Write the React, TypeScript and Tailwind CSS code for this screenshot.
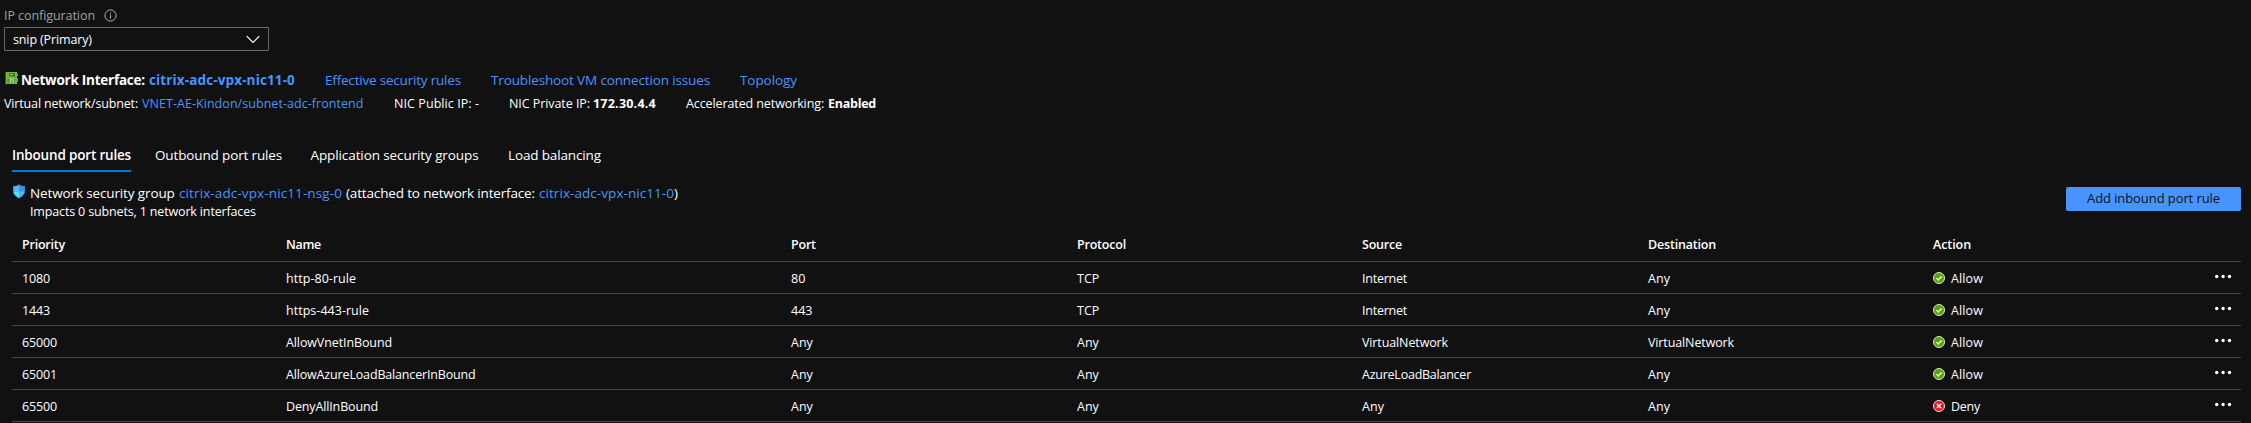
type Rule = {
  priority: string;
  name: string;
  nameTracking: string;
  port: string;
  protocol: string;
  source: string;
  sourceTracking: string;
  destination: string;
  destinationTracking: string;
  allow: boolean;
};

const rules: Rule[] = [
  { priority: "1080", name: "http-80-rule", nameTracking: "tracking-[0.04px]", port: "80", protocol: "TCP", source: "Internet", sourceTracking: "tracking-[-0.24px]", destination: "Any", destinationTracking: "tracking-[0.1px]", allow: true },
  { priority: "1443", name: "https-443-rule", nameTracking: "tracking-[0.03px]", port: "443", protocol: "TCP", source: "Internet", sourceTracking: "tracking-[-0.24px]", destination: "Any", destinationTracking: "tracking-[0.1px]", allow: true },
  { priority: "65000", name: "AllowVnetInBound", nameTracking: "tracking-[-0.11px]", port: "Any", protocol: "Any", source: "VirtualNetwork", sourceTracking: "tracking-[-0.12px]", destination: "VirtualNetwork", destinationTracking: "tracking-[-0.12px]", allow: true },
  { priority: "65001", name: "AllowAzureLoadBalancerInBound", nameTracking: "tracking-[-0.16px]", port: "Any", protocol: "Any", source: "AzureLoadBalancer", sourceTracking: "tracking-[-0.24px]", destination: "Any", destinationTracking: "tracking-[0.1px]", allow: true },
  { priority: "65500", name: "DenyAllInBound", nameTracking: "tracking-[-0.14px]", port: "Any", protocol: "Any", source: "Any", sourceTracking: "tracking-[0.1px]", destination: "Any", destinationTracking: "tracking-[0.1px]", allow: false },
];

const rowGrid =
  "grid grid-cols-[264px_505px_286px_285px_286px_285px_1fr] border-b border-[#484644] [&>*]:pl-2.5";

function InfoIcon() {
  return (
    <svg className="mt-[3px] ml-2 size-[13px]" viewBox="0 0 13 13" fill="none">
      <circle cx="6.5" cy="6.5" r="5.6" stroke="#b4b2b0" strokeWidth="1" />
      <path d="M6.5 5.6V9.6M6.5 3.4V4.6" stroke="#b4b2b0" strokeWidth="1" />
    </svg>
  );
}

function NicIcon() {
  return (
    <svg className="mt-[2px] mr-[3px] size-[13px]" viewBox="0 0 13 13">
      <path d="M0 .5h1v12H0z" fill="#4a4a4a" />
      <path d="M11 1.500h1.800v2.600H11zM11 6h1.800v4H11z" fill="#c8a11c" />
      <path d="M1 0h11v12H1z" fill="#6fb43f" />
      <path d="M4 1h6v3.500H4z" fill="#3d7a25" />
      <path d="M5 2h3v1H5z" fill="#8fcf5f" />
      <path d="M2.500 6.500h2v4h-2zM6 8h1.500v3H6zM9 6.500h1v4H9z" fill="#4c9130" />
      <path d="M5 5.500h1.200v5H5zM7.600 6h1v5h-1z" fill="#b9e39a" />
    </svg>
  );
}

function ShieldIcon() {
  return (
    <svg className="mr-1 h-[15px] w-[14px]" viewBox="0 0 14 15">
      <path d="M7 .3C5.300 1.700 3.200 2 1 2v5.200c0 3.500 3 5.600 6 7.300z" fill="#2f86d8" />
      <path d="M7 .3C8.700 1.700 10.800 2 13 2v5.200c0 3.500-3 5.600-6 7.300z" fill="#2f86d8" />
      <path d="M7 1.300C5.500 2.300 3.600 2.600 1.700 2.700V7.500H7z" fill="#5ab8f4" />
      <path d="M7 1.300C8.500 2.300 10.400 2.600 12.300 2.700V7.500H7z" fill="#3d93e8" />
      <path d="M1.700 7.500H7v6.200C4.500 12.200 1.900 10.400 1.700 7.500z" fill="#50e0fb" />
      <path d="M12.300 7.500H7v6.200c2.500-1.500 5.100-3.300 5.300-6.200z" fill="#5fb0f4" />
    </svg>
  );
}

function StatusIcon({ allow }: { allow: boolean }) {
  return (
    <svg className="mt-[3px] mr-[6px] size-3" viewBox="0 0 12 12" fill="none">
      <circle cx="6" cy="6" r="5.5" fill={allow ? "#57a300" : "#e81123"} stroke="#dfe5da" strokeWidth="1" />
      {allow ? (
        <path d="M3.300 6.100L5.200 8L8.700 4.200" stroke="#fff" strokeWidth="1.300" />
      ) : (
        <path d="M3.800 3.800L8.200 8.200M8.200 3.800L3.800 8.200" stroke="#fff" strokeWidth="1.300" />
      )}
    </svg>
  );
}

function More() {
  return (
    <svg className="mt-[7px] mr-[9px] h-4 w-[17px]" viewBox="0 0 17 16" fill="#fff">
      <circle cx="1.700" cy="7.500" r="1.700" />
      <circle cx="8.100" cy="7.500" r="1.700" />
      <circle cx="14.500" cy="7.500" r="1.700" />
    </svg>
  );
}

export default function App() {
  return (
    <div className="h-[423px] overflow-hidden bg-[#111111] pt-1.5 font-['Open_Sans',sans-serif] text-[12.5px] leading-5 whitespace-nowrap text-white">
      <div className="flex h-5 pl-1 tracking-[-0.07px] text-[#a19f9d]">
        <span className="w-[92px]">IP configuration</span>
        <InfoIcon />
      </div>
      <div className="mt-px ml-1 flex h-6 w-[265px] justify-between rounded-[1px] border border-[#6b6967] pr-2 pl-2">
        <span className="mt-0.5 tracking-[-0.13px]">snip (Primary)</span>
        <svg className="mt-[7px] h-[9px] w-[14px]" viewBox="0 0 14 9" fill="none">
          <path d="M.700 1.200L7 7.500L13.300 1.200" stroke="#fff" strokeWidth="1.200" />
        </svg>
      </div>

      <div className="mt-[19px] flex h-5 pl-[5px] text-[13.5px] text-[#4894fe]">
        <NicIcon />
        <span className="w-32 font-bold tracking-[-0.24px] text-white">Network Interface:</span>
        <a className="w-44 font-bold tracking-[0.13px]">citrix-adc-vpx-nic11-0</a>
        <a className="w-[166px] tracking-[-0.2px]">Effective security rules</a>
        <a className="w-[249px] tracking-[-0.135px]">Troubleshoot VM connection issues</a>
        <a className="tracking-[-0.07px]">Topology</a>
      </div>
      <div className="mt-1 flex h-5 pl-1">
        <span className="w-[138px] tracking-[-0.15px]">Virtual network/subnet:</span>
        <a className="w-[252px] tracking-[0.05px] text-[#4894fe]">VNET-AE-Kindon/subnet-adc-frontend</a>
        <span className="w-[115px] tracking-[0.07px]">NIC Public IP: -</span>
        <span className="w-[84px] tracking-[-0.07px]">NIC Private IP:</span>
        <b className="w-[93px] tracking-[0.22px]">172.30.4.4</b>
        <span className="w-[142px] tracking-[-0.1px]">Accelerated networking:</span>
        <b className="tracking-[-0.26px]">Enabled</b>
      </div>

      <div className="mt-[31px] flex h-[27px] pl-3 text-[13.5px]">
        <div className="mr-6 w-[119px] border-b-2 border-[#0078d4] font-semibold tracking-[-0.18px]">Inbound port rules</div>
        <div className="w-[155.5px] tracking-[-0.14px]">Outbound port rules</div>
        <div className="w-[197.5px] tracking-[-0.1px]">Application security groups</div>
        <div className="tracking-[-0.14px]">Load balancing</div>
      </div>

      <div className="mt-3 flex h-9 justify-between pr-2.5 pl-3 leading-[18px]">
        <div className="flex">
          <ShieldIcon />
          <div>
            <div className="flex text-[13.5px]">
              <span className="w-[149px] tracking-[-0.13px]">Network security group</span>
              <a className="w-[167px] tracking-[0.115px] text-[#4894fe]">citrix-adc-vpx-nic11-nsg-0</a>
              <span className="w-[193px] tracking-[-0.155px]">(attached to network interface:</span>
              <a className="tracking-[0.06px] text-[#4894fe]">citrix-adc-vpx-nic11-0</a>
              <span>)</span>
            </div>
            <div className="pt-px tracking-[-0.15px]">Impacts 0 subnets, 1 network interfaces</div>
          </div>
        </div>
        <button className="mt-[3px] h-6 w-[175px] rounded-[2px] bg-[#4894fe] pb-0.5 text-[13px] leading-[22px] tracking-[-0.085px] text-[#111111]">
          Add inbound port rule
        </button>
      </div>

      <div className="mr-2.5 ml-3">
        <div className={`${rowGrid} h-[42px] pt-[15px] font-semibold`}>
          <span className="tracking-[-0.21px]">Priority</span>
          <span className="tracking-[-0.3px]">Name</span>
          <span className="tracking-[-0.2px]">Port</span>
          <span className="tracking-[-0.2px]">Protocol</span>
          <span className="tracking-[-0.2px]">Source</span>
          <span className="tracking-[-0.19px]">Destination</span>
          <span className="tracking-[-0.08px]">Action</span>
        </div>
        {rules.map((r) => (
          <div key={r.priority} className={`${rowGrid} h-8`}>
            <span className="pt-[7px] tracking-[-0.15px]">{r.priority}</span>
            <span className={`pt-[7px] ${r.nameTracking}`}>{r.name}</span>
            <span className="pt-[7px]">{r.port}</span>
            <span className="pt-[7px]">{r.protocol}</span>
            <span className={`pt-[7px] ${r.sourceTracking}`}>{r.source}</span>
            <span className={`pt-[7px] ${r.destinationTracking}`}>{r.destination}</span>
            <div className="flex justify-between">
              <div className="flex pt-[7px]">
                <StatusIcon allow={r.allow} />
                <span className={r.allow ? "tracking-[0.1px]" : "tracking-[-0.25px]"}>{r.allow ? "Allow" : "Deny"}</span>
              </div>
              <More />
            </div>
          </div>
        ))}
      </div>
    </div>
  );
}
